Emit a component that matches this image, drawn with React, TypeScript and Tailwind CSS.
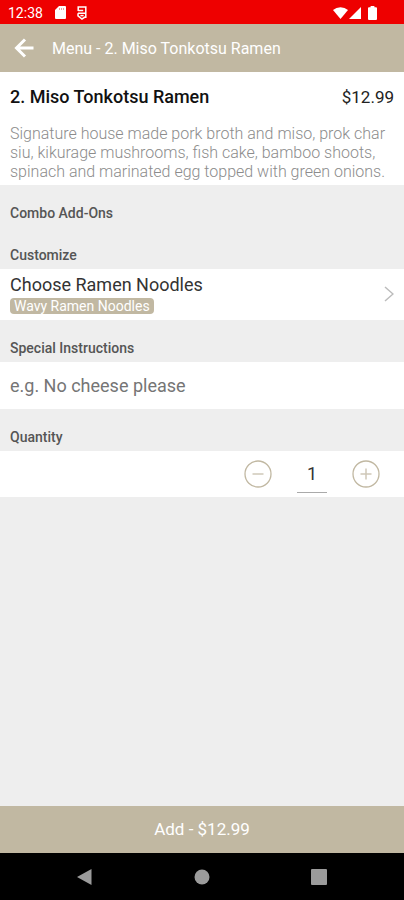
import type { ReactNode } from "react";

type SectionTitleProps = {
  children: ReactNode;
  htmlFor?: string;
};

function SectionTitle({ children, htmlFor }: SectionTitleProps) {
  return (
    <h2 className="px-[10px] pt-5 pb-[6px] text-[14px] leading-4 font-medium text-[#555555]">
      {htmlFor ? <label htmlFor={htmlFor}>{children}</label> : children}
    </h2>
  );
}

function StatusBar() {
  return (
    <div className="flex h-6 items-center bg-[#ee0000] px-2 pt-px text-white">
      <span className="text-[14px] leading-4">12:38</span>
      <svg className="ml-3 h-[13px] w-[11px]" viewBox="0 0 11 13" aria-hidden="true">
        <path
          fill="currentColor"
          d="M4 0h6a1 1 0 0 1 1 1v11a1 1 0 0 1-1 1H1a1 1 0 0 1-1-1V4z"
        />
        <path stroke="#ee0000" strokeOpacity="0.4" d="M4.500 2v2M6.500 2v2M8.500 2v2" />
      </svg>
      <svg className="ml-[11px] h-[14px] w-[10px]" viewBox="0 0 10 14" aria-hidden="true">
        <g fill="none" stroke="currentColor" strokeWidth="1.500">
          <path d="M1.200 5V1h7.600v11M1.200 4.600h5M1 7.200h7.800M1 7.200v2.600L5 13l4-2.600" />
          <path d="M3.400 9.600h3.200" />
        </g>
      </svg>
      <svg className="ml-auto h-3 w-[15px]" viewBox="0 0 15 12" aria-hidden="true">
        <path fill="currentColor" d="M7.500 12 0 3a11.500 11.500 0 0 1 15 0z" />
      </svg>
      <svg className="ml-px h-3 w-3" viewBox="0 0 12 12" aria-hidden="true">
        <path fill="currentColor" d="M12 0v12H0z" />
      </svg>
      <svg className="mr-[19px] ml-[7px] h-[14px] w-[9px]" viewBox="0 0 9 14" aria-hidden="true">
        <path
          fill="currentColor"
          d="M2.600 0h3.800v1.300H8a1 1 0 0 1 1 1V13a1 1 0 0 1-1 1H1a1 1 0 0 1-1-1V2.300a1 1 0 0 1 1-1h1.600z"
        />
      </svg>
    </div>
  );
}

function Header() {
  return (
    <header className="flex h-12 items-center bg-[#c1b8a2] px-[14px] text-white">
      <button type="button" aria-label="Back" className="mr-[18px]">
        <svg className="h-5 w-5" viewBox="0 0 20 20" fill="none" aria-hidden="true">
          <path stroke="currentColor" strokeWidth="3" d="M19.500 10H3M11 1.500 2.500 10l8.500 8.500" />
        </svg>
      </button>
      <h1 className="pt-px text-base">Menu - 2. Miso Tonkotsu Ramen</h1>
    </header>
  );
}

function NavigationBar() {
  return (
    <nav className="flex h-[47px] items-center bg-black text-[#9b9b9b]">
      <div className="flex flex-1 justify-end">
        <button type="button" aria-label="Back" className="mr-[102px]">
          <svg className="h-4 w-4" viewBox="0 0 16 16" aria-hidden="true">
            <path fill="currentColor" d="M15.500 0v16L1 8z" />
          </svg>
        </button>
      </div>
      <button type="button" aria-label="Home">
        <svg className="h-4 w-4" viewBox="0 0 16 16" aria-hidden="true">
          <circle cx="8" cy="8" r="7.500" fill="currentColor" />
        </svg>
      </button>
      <div className="flex flex-1">
        <button type="button" aria-label="Recent apps" className="ml-[101px]">
          <svg className="h-4 w-4" viewBox="0 0 16 16" aria-hidden="true">
            <rect width="16" height="16" rx="1" fill="currentColor" />
          </svg>
        </button>
      </div>
    </nav>
  );
}

export default function App() {
  return (
    <div className="flex min-h-screen flex-col bg-[#eeeeee] font-['Roboto',sans-serif]">
      <StatusBar />
      <Header />
      <main className="flex-1">
        <section className="bg-white px-[10px] pt-[13px] pb-1">
          <div className="flex items-center justify-between leading-6">
            <h2 className="text-[18px] font-medium text-[#111111]">2. Miso Tonkotsu Ramen</h2>
            <span className="text-[17px] text-[#222222]">$12.99</span>
          </div>
          <p className="mt-[15px] text-base leading-[19px] font-light text-[#8c8c8c]">
            Signature house made pork broth and miso, prok char siu, kikurage
            mushrooms, fish cake, bamboo shoots, spinach and marinated egg
            topped with green onions.
          </p>
        </section>

        <SectionTitle>Combo Add-Ons</SectionTitle>

        <SectionTitle>Customize</SectionTitle>
        <button
          type="button"
          className="flex w-full items-center justify-between bg-white px-[10px] pt-1 pb-[6px] text-left"
        >
          <span className="flex flex-col items-start">
            <span className="text-[18px] leading-6 text-[#333333]">Choose Ramen Noodles</span>
            <span className="mt-px rounded bg-[#c1b8a2] px-1 text-[14px] leading-4 text-white">
              Wavy Ramen Noodles
            </span>
          </span>
          <svg className="h-4 w-[10px]" viewBox="0 0 10 16" fill="none" aria-hidden="true">
            <path stroke="#bcbcbc" strokeWidth="1.500" d="M1 1l8 7-8 7" />
          </svg>
        </button>

        <SectionTitle htmlFor="instructions">Special Instructions</SectionTitle>
        <input
          id="instructions"
          type="text"
          placeholder="e.g. No cheese please"
          className="block h-[47px] w-full bg-white px-[10px] text-[18px] text-[#333333] placeholder:text-[#757575] focus:outline-none"
        />

        <SectionTitle htmlFor="quantity">Quantity</SectionTitle>
        <div className="flex h-[46px] items-center justify-end bg-white px-6">
          <button type="button" aria-label="Decrease quantity">
            <svg className="h-7 w-7" viewBox="0 0 28 28" fill="none" aria-hidden="true">
              <circle cx="14" cy="14" r="13" stroke="#c1b8a2" strokeWidth="1.300" />
              <path stroke="#cfc8b8" strokeWidth="1.500" d="M8.500 14h11" />
            </svg>
          </button>
          <input
            id="quantity"
            type="text"
            inputMode="numeric"
            defaultValue="1"
            className="mx-[25px] h-[38px] w-[30px] border-b border-[#aaaaaa] text-center text-[18px] text-[#333333] focus:outline-none"
          />
          <button type="button" aria-label="Increase quantity">
            <svg className="h-7 w-7" viewBox="0 0 28 28" fill="none" aria-hidden="true">
              <circle cx="14" cy="14" r="13" stroke="#c1b8a2" strokeWidth="1.300" />
              <path stroke="#cfc8b8" strokeWidth="1.500" d="M8.500 14h11M14 8.500v11" />
            </svg>
          </button>
        </div>
      </main>
      <button type="button" className="h-[47px] w-full bg-[#c1b8a2] text-[17px] text-white">
        Add - $12.99
      </button>
      <NavigationBar />
    </div>
  );
}
